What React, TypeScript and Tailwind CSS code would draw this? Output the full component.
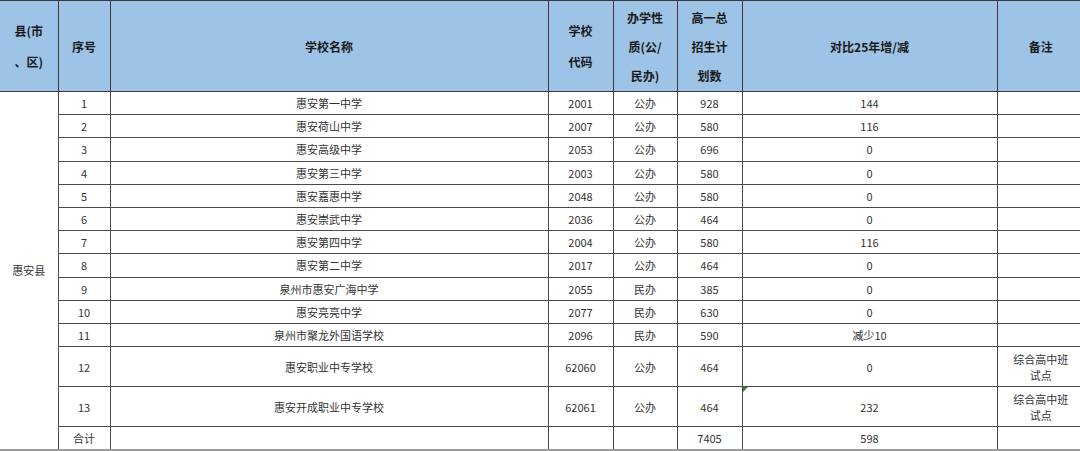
import React from "react";

type Row = { n: string; name: string; code: string; type: string; plan: string; diff: string; note?: boolean; tall?: boolean };

const rows: Row[] = [
  { n: "1", name: "惠安第一中学", code: "2001", type: "公办", plan: "928", diff: "144" },
  { n: "2", name: "惠安荷山中学", code: "2007", type: "公办", plan: "580", diff: "116" },
  { n: "3", name: "惠安高级中学", code: "2053", type: "公办", plan: "696", diff: "0" },
  { n: "4", name: "惠安第三中学", code: "2003", type: "公办", plan: "580", diff: "0" },
  { n: "5", name: "惠安嘉惠中学", code: "2048", type: "公办", plan: "580", diff: "0" },
  { n: "6", name: "惠安崇武中学", code: "2036", type: "公办", plan: "464", diff: "0" },
  { n: "7", name: "惠安第四中学", code: "2004", type: "公办", plan: "580", diff: "116" },
  { n: "8", name: "惠安第二中学", code: "2017", type: "公办", plan: "464", diff: "0" },
  { n: "9", name: "泉州市惠安广海中学", code: "2055", type: "民办", plan: "385", diff: "0" },
  { n: "10", name: "惠安亮亮中学", code: "2077", type: "民办", plan: "630", diff: "0" },
  { n: "11", name: "泉州市聚龙外国语学校", code: "2096", type: "民办", plan: "590", diff: "减少10" },
  { n: "12", name: "惠安职业中专学校", code: "62060", type: "公办", plan: "464", diff: "0", note: true, tall: true },
  { n: "13", name: "惠安开成职业中专学校", code: "62061", type: "公办", plan: "464", diff: "232", note: true, tall: true },
];

const font = { fontFamily: '"Noto Sans CJK SC", "Noto Sans", sans-serif' };

export default function App() {
  const th = "border border-[#3a3a3a] bg-[#9dc3e6] text-center align-middle font-bold text-[12px] text-[#1a1a1a] p-0";
  const td = "border border-[#4a4a4a] text-center align-middle text-[11px] leading-[16px] text-[#333] p-0";
  const bot = " border-b-[2px] border-b-[#9a9a9a]";
  return (
    <div className="w-[1080px] h-[451px] overflow-hidden bg-white" style={font}>
      <table className="table-fixed border-collapse w-[1084px]">
        <colgroup>
          <col className="w-[58px]" />
          <col className="w-[52px]" />
          <col className="w-[438px]" />
          <col className="w-[65px]" />
          <col className="w-[64px]" />
          <col className="w-[65px]" />
          <col className="w-[255px]" />
          <col className="w-[87px]" />
        </colgroup>
        <thead>
          <tr className="h-[91px]">
            <th className={th + " border-l-0 leading-[31px]"}>县(市<br />、区)</th>
            <th className={th + " leading-[31px]"}>序号</th>
            <th className={th + " leading-[31px]"}>学校名称</th>
            <th className={th + " leading-[31px]"}>学校<br />代码</th>
            <th className={th + " leading-[29px]"}>办学性<br />质(公/<br />民办)</th>
            <th className={th + " leading-[29px]"}>高一总<br />招生计<br />划数</th>
            <th className={th + " leading-[31px]"}>对比25年增/减</th>
            <th className={th + " border-r-0 leading-[31px]"}>备注</th>
          </tr>
        </thead>
        <tbody>
          {rows.map((r, i) => (
            <tr key={r.n} className={r.tall ? "h-[40px]" : "h-[23.2px]"}>
              {i === 0 && (
                <td rowSpan={14} className={td + " border-l-0" + bot}>惠安县</td>
              )}
              <td className={td}>{r.n}</td>
              <td className={td}>{r.name}</td>
              <td className={td + (r.n === "1" ? " text-[#3d5654]" : "")}>{r.code}</td>
              <td className={td}>{r.type}</td>
              <td className={td}>{r.plan}</td>
              <td className={td + " text-[#3d5654] relative"}>
                {r.n === "13" && (
                  <span className="absolute left-0 top-0 w-0 h-0 border-t-[5px] border-t-[#2e8b2e] border-r-[5px] border-r-transparent" />
                )}
                {r.diff}
              </td>
              <td className={td + " border-r-0"}>
                {r.note ? (
                  <>
                    综合高中班
                    <br />
                    试点
                  </>
                ) : null}
              </td>
            </tr>
          ))}
          <tr className="h-[23px]">
            <td className={td + bot}>合计</td>
            <td className={td + bot}></td>
            <td className={td + bot}></td>
            <td className={td + bot}></td>
            <td className={td + bot}>7405</td>
            <td className={td + bot + " text-[#3d5654]"}>598</td>
            <td className={td + " border-r-0" + bot}></td>
          </tr>
        </tbody>
      </table>
    </div>
  );
}
